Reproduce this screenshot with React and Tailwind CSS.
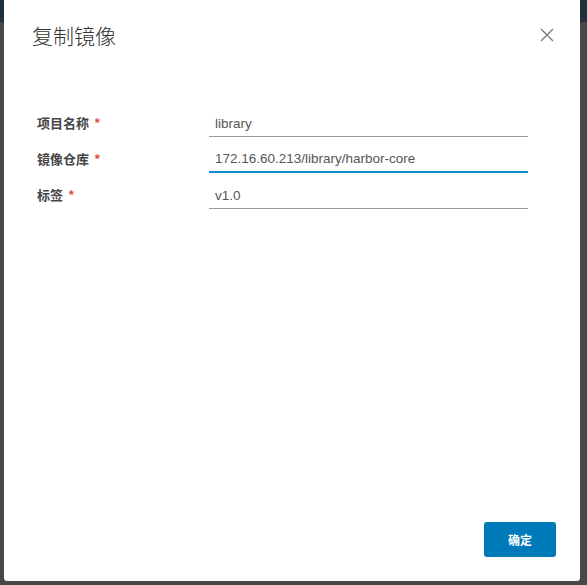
import React from 'react';

const fields = [
  { label: '项目名称', value: 'library', active: false },
  { label: '镜像仓库', value: '172.16.60.213/library/harbor-core', active: true },
  { label: '标签', value: 'v1.0', active: false },
];

const CopyImageDialog = () => {
  return (
    <div className="relative w-[587px] h-[585px] overflow-hidden bg-[#474747] font-['Liberation_Sans','Noto_Sans_CJK_SC',sans-serif]">
      {/* page behind the backdrop */}
      <div className="h-[22px] bg-[#1f313a]"></div>

      {/* Modal */}
      <div className="absolute left-[4px] top-0 w-[576px] h-[581px] bg-white rounded-b-[3px] flex flex-col">
        <div className="flex items-center justify-between pl-[28px] pr-[25px] pt-[22px] h-[48px]">
          <h3 className="text-[21px] font-light text-[#333] leading-none font-['Noto_Sans_CJK_SC',sans-serif]">复制镜像</h3>
          <button className="w-[16px] h-[16px] flex items-center justify-center text-[#777]">
            <svg width="16" height="16" viewBox="0 0 16 16" fill="none" stroke="currentColor" strokeWidth="1.3">
              <path d="M2 2 L14 14 M14 2 L2 14" />
            </svg>
          </button>
        </div>

        <div className="pl-[33px] pt-[64px] flex flex-col gap-[11px]">
          {fields.map((f) => (
            <div key={f.label} className="flex items-center h-[25px]">
              <label className="w-[172px] pb-[3px] text-[13px] font-bold text-[#454545] font-['Noto_Sans_CJK_SC',sans-serif]">
                {f.label}
                <span className="text-[#e0533f] ml-[5px]">*</span>
              </label>
              <div
                className={
                  f.active
                    ? 'w-[319px] h-[25px] flex items-center pl-[6px] border-b-2 border-[#0f8ed0] text-[13.5px] text-[#565656]'
                    : 'w-[319px] h-[25px] flex items-center pl-[6px] border-b border-[#9a9a9a] text-[13.5px] text-[#565656]'
                }
              >
                {f.value}
              </div>
            </div>
          ))}
        </div>

        <div className="mt-auto flex justify-end pr-[24px] pb-[24px]">
          <button className="w-[72px] h-[35px] bg-[#0079b8] rounded-[3px] text-white text-[12px] font-bold font-['Noto_Sans_CJK_SC',sans-serif]">
            确定
          </button>
        </div>
      </div>
    </div>
  );
};

export default CopyImageDialog;
